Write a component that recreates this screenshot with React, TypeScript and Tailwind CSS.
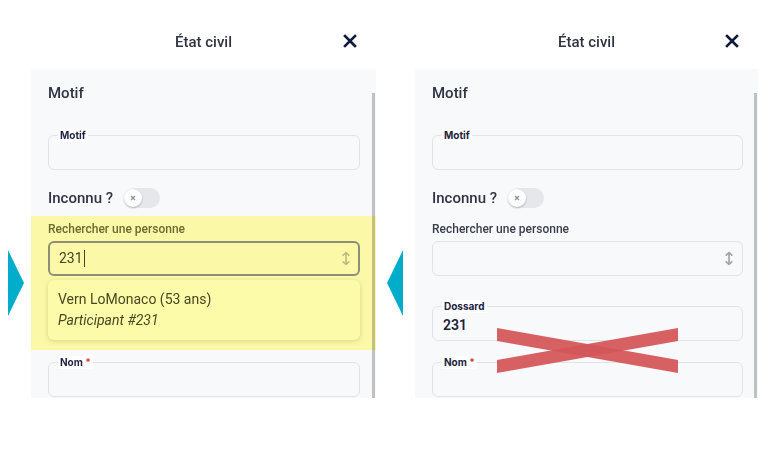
const font = { fontFamily: 'Roboto, "Noto Sans", sans-serif' };

function Header() {
  return (
    <div className="grid h-[69px] grid-cols-[1fr_auto_1fr] items-start pt-[32px]">
      <div />
      <div className="text-[15px] font-medium leading-[20px] text-[#2f3342]">État civil</div>
      <div className="flex justify-end">
        <svg width="14" height="14" viewBox="0 0 14 14" className="mr-[19px] mt-[2px]">
          <path d="M2 2 L12 12 M12 2 L2 12" stroke="#101a3c" strokeWidth="2.6" strokeLinecap="square" />
        </svg>
      </div>
    </div>
  );
}

function UpDown({ color }: { color: string }) {
  return (
    <svg width="8" height="15" viewBox="0 0 8 15" fill="none">
      <path d="M4 1.5 V13.5 M1.2 4.2 L4 1.5 L6.8 4.2 M1.2 10.8 L4 13.5 L6.8 10.8" stroke={color} strokeWidth="1.6" strokeLinecap="round" strokeLinejoin="round" />
    </svg>
  );
}

function Field({
  label,
  required,
  value,
  className = '',
}: {
  label: string;
  required?: boolean;
  value?: string;
  className?: string;
}) {
  return (
    <div className={`relative h-[35px] rounded-[6px] border border-[#e1e3e8] bg-[#f8f9fb] ${className}`}>
      <span
        className="absolute -top-[7px] left-[9px] bg-white px-[2px] text-[10px] font-bold leading-[13px] text-[#1c2340]"
        style={{ fontFamily: 'Inter, sans-serif' }}
      >
        {label}
        {required && <span className="text-[#d33a3a]"> *</span>}
      </span>
      {value && (
        <div className="pl-[10px] pt-[9px] text-[14px] font-semibold leading-[18px] text-[#1a2035]">{value}</div>
      )}
    </div>
  );
}

function Toggle() {
  return (
    <div className="ml-[11px] flex h-[20px] w-[36px] items-center rounded-full bg-[#e6e7ea]">
      <div className="flex h-[18px] w-[18px] items-center justify-center rounded-full bg-white shadow-[0_1px_2px_rgba(0,0,0,0.25)]">
        <svg width="6" height="6" viewBox="0 0 6 6">
          <path d="M1 1 L5 5 M5 1 L1 5" stroke="#8a8f99" strokeWidth="1.3" />
        </svg>
      </div>
    </div>
  );
}

function TopFields() {
  return (
    <>
      <div className="pt-[12px] text-[15px] font-medium leading-[24px] text-[#2f3342]">Motif</div>
      <Field label="Motif" className="mt-[30px]" />
      <div className="mt-[16px] flex h-[24px] items-center">
        <span className="text-[15px] font-medium text-[#2f3342]">Inconnu ?</span>
        <Toggle />
      </div>
    </>
  );
}

function Scrollbar() {
  return <div className="absolute right-[1px] top-[24px] bottom-0 w-[3px] bg-[#c6c6c6] mix-blend-multiply" />;
}

function Triangle({ dir }: { dir: 'right' | 'left' }) {
  return (
    <svg width="16" height="66" viewBox="0 0 16 66">
      <path d={dir === 'right' ? 'M0 0 L16 33 L0 66 Z' : 'M16 0 L0 33 L16 66 Z'} fill="#02adcb" />
    </svg>
  );
}

export default function App() {
  return (
    <div className="flex h-[467px] w-[778px] items-start bg-white" style={font}>
      <div className="w-[31px] pl-[8px] pt-[250px]">
        <Triangle dir="right" />
      </div>

      {/* Before */}
      <div className="w-[345px]">
        <Header />
        <div className="relative h-[329px] overflow-hidden bg-[#f8f9fb]">
          <div className="pl-[17px] pr-[16px]">
            <TopFields />
          </div>
          <div className="mt-[6px] bg-[#fbf9a8] pb-[10px] pl-[17px] pr-[16px]">
            <div className="pt-[5px] text-[12px] font-medium leading-[16px] text-[#6b6a30]">Rechercher une personne</div>
            <div className="mt-[4px] flex h-[35px] items-center rounded-[6px] border-2 border-[#8e8d76] pl-[9px] pr-[8px]">
              <span className="text-[14px] text-[#45441f]">231</span>
              <span className="ml-[1px] h-[17px] w-px bg-[#45441f]" />
              <div className="flex-1" />
              <UpDown color="#bdba80" />
            </div>
            <div className="mt-[4px] h-[60px] rounded-[6px] bg-[#fcfbaa] px-[10px] pt-[9px] shadow-[0_1px_5px_rgba(80,80,20,0.22)]">
              <div className="text-[14px] leading-[20px] text-[#48471f]">Vern LoMonaco (53 ans)</div>
              <div className="mt-[1px] text-[14px] italic leading-[20px] text-[#48471f]">Participant #231</div>
            </div>
          </div>
          <div className="pl-[17px] pr-[16px]">
            <Field label="Nom" required className="mt-[12px]" />
          </div>
          <Scrollbar />
        </div>
      </div>

      <div className="w-[39px] pl-[11px] pt-[250px]">
        <Triangle dir="left" />
      </div>

      {/* After */}
      <div className="w-[343px]">
        <Header />
        <div className="relative h-[329px] overflow-hidden bg-[#f8f9fb]">
          <div className="pl-[17px] pr-[15px]">
            <TopFields />
            <div className="mt-[11px] text-[12px] font-medium leading-[16px] text-[#3a3e4a]">Rechercher une personne</div>
            <div className="mt-[4px] flex h-[35px] items-center justify-end rounded-[6px] border border-[#e1e3e8] pr-[9px]">
              <UpDown color="#9ea2aa" />
            </div>
            <Field label="Dossard" value="231" className="mt-[30px]" />
            <Field label="Nom" required className="mt-[21px]" />
          </div>
          <Scrollbar />
          <svg className="absolute left-[82px] top-[259px]" width="181" height="45" viewBox="0 0 181 45">
            <path d="M0 0 L181 32 L181 45 L0 13 Z" fill="#d4575a" fillOpacity="0.95" />
            <path d="M0 32 L181 0 L181 13 L0 45 Z" fill="#d4575a" fillOpacity="0.95" />
          </svg>
        </div>
      </div>
    </div>
  );
}
